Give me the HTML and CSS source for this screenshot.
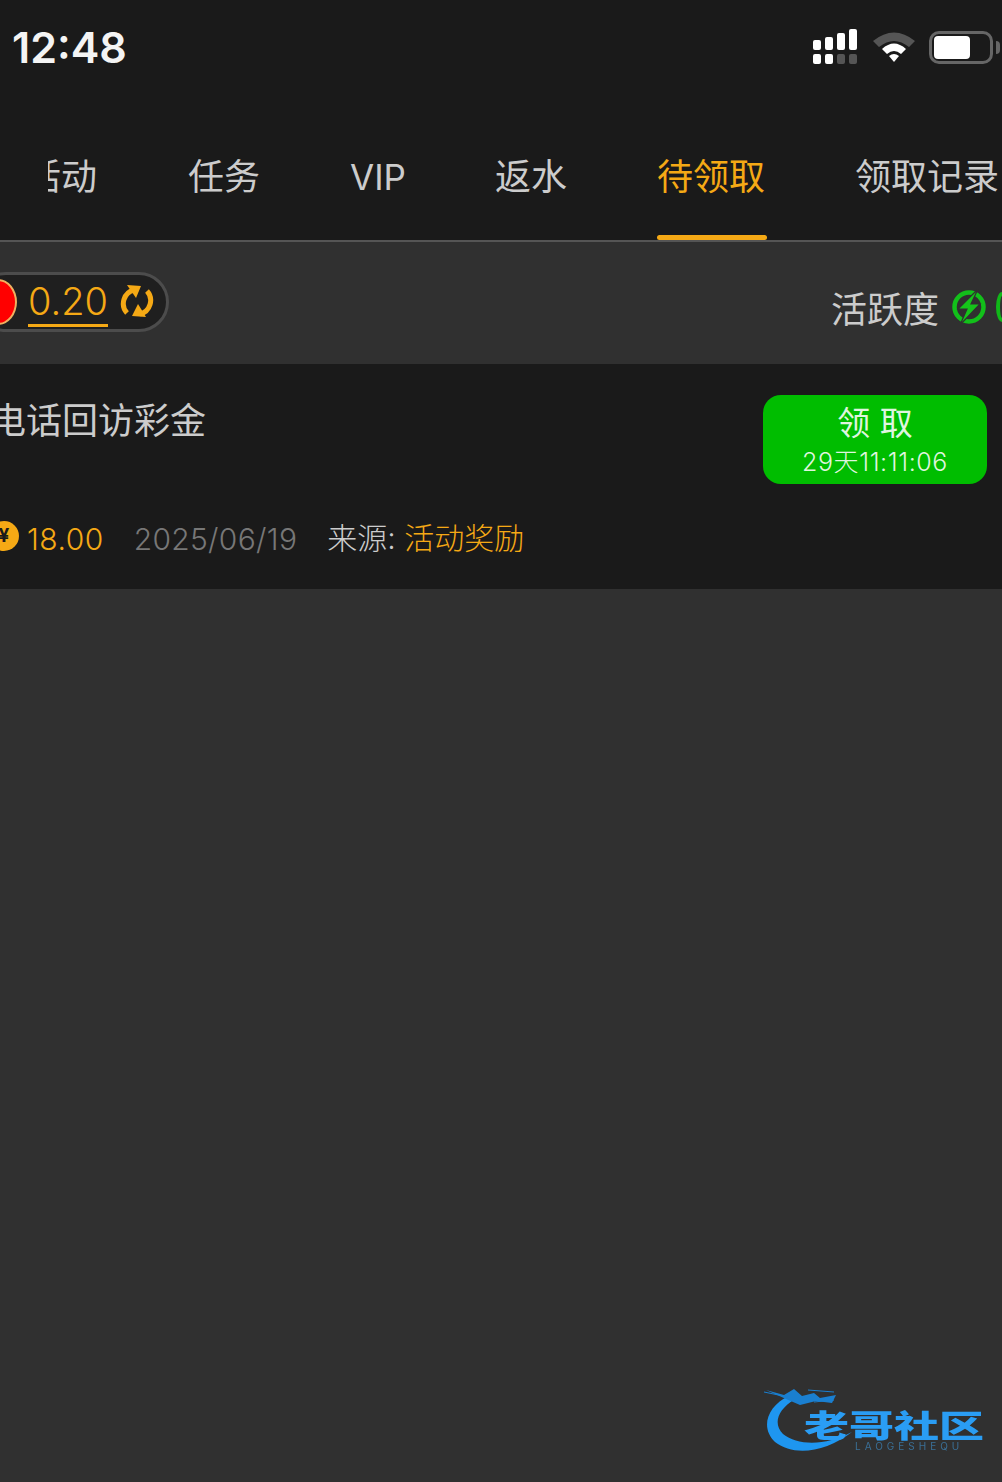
FILE: index.html
```html
<!DOCTYPE html>
<html>
<head>
    <meta charset="UTF-8">
    <title>待领取</title>
    <link rel="stylesheet" href="styles.css">
</head>
<body>
    <!-- Status bar -->
    <div class="status-bar">
        <span class="clock">12:48</span>
        <div class="status-icons">
            <svg class="signal" width="46" height="36" viewBox="0 0 46 36">
                <rect x="1" y="11" width="8" height="10" rx="2" fill="#fff"/>
                <rect x="13" y="8" width="8" height="13" rx="2" fill="#fff"/>
                <rect x="25" y="4" width="8" height="17" rx="2" fill="#fff"/>
                <rect x="37" y="0" width="8" height="21" rx="2" fill="#fff"/>
                <rect x="1" y="25" width="8" height="10" rx="2" fill="#fff"/>
                <rect x="13" y="25" width="8" height="10" rx="2" fill="#fff"/>
                <rect x="25" y="25" width="8" height="10" rx="2" fill="#555"/>
                <rect x="37" y="25" width="8" height="10" rx="2" fill="#555"/>
            </svg>
            <svg width="44" height="34" viewBox="0 0 44 34">
                <path d="M1 11 Q22 -6 43 11 L37 17 Q22 5 7 17 Z" fill="#555"/>
                <path d="M10 19 Q22 8 34 19 L29 24 Q22 18 15 24 Z" fill="#fff"/>
                <path d="M17 26 Q22 22 27 26 L22 32 Z" fill="#fff"/>
            </svg>
            <div class="battery"><div class="battery-level"></div></div>
        </div>
    </div>

    <!-- Tabs -->
    <div class="tabs">
        <div class="tab tab-cut"><span>活动</span></div>
        <div class="tab">任务</div>
        <div class="tab tab-vip">VIP</div>
        <div class="tab tab-back">返水</div>
        <div class="tab tab-active">待领取</div>
        <div class="tab tab-last">领取记录</div>
    </div>

    <!-- Balance row -->
    <div class="balance-row">
        <div class="balance-pill">
            <div class="red-dot"></div>
            <span class="balance">0.20</span>
            <svg class="refresh" width="34" height="34" viewBox="0 0 34 34" fill="none">
                <path d="M7 28 A14 14 0 0 1 14 5" stroke="#f5a915" stroke-width="5"/>
                <path d="M27 6 A14 14 0 0 1 20 29" stroke="#f5a915" stroke-width="5"/>
                <path d="M7 0 L21 1 L16 13 Z" fill="#f5a915"/>
                <path d="M26 32 L12 31 L18 19 Z" fill="#f5a915"/>
            </svg>
        </div>
        <div class="activity">
            <span>活跃度</span>
            <svg width="34" height="36" viewBox="0 0 34 36" fill="none">
                <circle cx="17" cy="18" r="14.5" stroke="#12c01a" stroke-width="4.5"/>
                <path d="M26 0 L6 20 L15 20 L8 36 L28 15 L19 15 Z" fill="#15c41a" stroke="#303030" stroke-width="1.2"/>
            </svg>
            <div class="activity-next"></div>
        </div>
    </div>

    <!-- Reward card -->
    <div class="card">
        <div class="card-top">
            <div class="card-title">电话回访彩金</div>
            <button class="claim">
                <span class="claim-label">领 取</span>
                <span class="claim-time">29天11:11:06</span>
            </button>
        </div>
        <div class="card-meta">
            <span class="coin">¥</span>
            <span class="amount">18.00</span>
            <span class="date">2025/06/19</span>
            <span class="source">来源: <em>活动奖励</em></span>
        </div>
    </div>

    <!-- Watermark -->
    <div class="watermark">
        <svg class="dragon" width="110" height="70" viewBox="0 0 110 70" fill="none">
            <path d="M25 10 C3 20 -4 42 11 56 C30 71 62 66 88 46 C62 60 34 60 19 48 C9 38 13 24 31 13 Z" fill="#1e96f0"/>
            <path d="M2 4 L20 9 L30 3 L38 10 L50 7 L56 12 L72 9 L68 17 L52 15 L36 19 L22 13 Z" fill="#1a7fd0"/>
            <path d="M0 6 L24 11 M44 4 L70 6 M50 16 L70 14" stroke="#1a7fd0" stroke-width="1"/>
        </svg>
        <div class="wm-name">老哥社区</div>
        <div class="wm-sub">LAOGESHEQU</div>
    </div>
</body>
</html>
```

FILE: styles.css
```css
body {
    margin: 0;
    width: 1002px;
    height: 1482px;
    overflow: hidden;
    position: relative;
    background: #303030;
    color: #ccc;
    font-family: Inter, "Noto Sans CJK SC", sans-serif;
}

.status-bar {
    height: 104px;
    padding: 0 9px 10px 12px;
    box-sizing: border-box;
    background: #1a1a1a;
    display: flex;
    align-items: center;
    justify-content: space-between;
}

.clock {
    font-size: 43px;
    font-weight: 600;
    color: #f4f4f4;
}

.status-icons {
    display: flex;
    align-items: center;
    gap: 13px;
}

.signal {
    margin-right: 1px;
}

.battery {
    width: 64px;
    height: 33px;
    padding: 2px;
    box-sizing: border-box;
    border: 3px solid #666;
    border-radius: 10px;
    position: relative;
}

.battery:after {
    content: "";
    position: absolute;
    right: -10px;
    top: 7px;
    width: 4px;
    height: 13px;
    background: #666;
    border-radius: 0 4px 4px 0;
}

.battery-level {
    width: 36px;
    height: 100%;
    background: #fff;
    border-radius: 4px;
}

.tabs {
    height: 136px;
    background: #1a1a1a;
    border-bottom: 2px solid #555;
    display: flex;
    padding-left: 48px;
    overflow: hidden;
}

.tab {
    flex: none;
    height: 100%;
    line-height: 146px;
    font-size: 36px;
    color: #ccc;
    white-space: nowrap;
    margin-left: 91px;
    position: relative;
}

.tab-cut {
    width: 49px;
    margin-left: 0;
    overflow: hidden;
}

.tab-cut span {
    display: block;
    margin-left: -23px;
}

.tab-vip {
    margin-left: 90px;
    font-size: 35px;
}

.tab-back {
    margin-left: 89px;
}

.tab-active {
    margin-left: 90px;
    color: #f5a915;
}

.tab-active:after {
    content: "";
    position: absolute;
    left: 0;
    right: -2px;
    bottom: 0;
    height: 5px;
    border-radius: 3px;
    background: #f5a915;
}

.tab-last {
    margin-left: 90px;
}

.balance-row {
    height: 122px;
    display: flex;
    justify-content: space-between;
    overflow: hidden;
}

.balance-pill {
    margin: 30px 0 0 -24px;
    width: 193px;
    height: 60px;
    box-sizing: border-box;
    border: 3px solid #4c4c4c;
    border-radius: 30px;
    background: #1f1f1f;
    display: flex;
    align-items: center;
}

.red-dot {
    flex: none;
    width: 38px;
    height: 46px;
    box-sizing: border-box;
    background: #f00;
    border: 2px solid #f0b060;
    border-radius: 50%;
}

.balance {
    margin-left: 11px;
    font-size: 38px;
    font-weight: 300;
    line-height: 46px;
    color: #f5a915;
    border-bottom: 3px solid #f5a915;
}

.refresh {
    margin-left: 12px;
    flex: none;
}

.activity {
    display: flex;
    align-items: center;
    height: 36px;
    margin-top: 47px;
    font-size: 36px;
    color: #ccc;
}

.activity svg {
    margin-left: 13px;
    flex: none;
}

.activity-next {
    width: 12px;
    height: 30px;
    margin: 0 -6px 0 10px;
    box-sizing: border-box;
    border: 4px solid #10b818;
    border-radius: 50%;
}

.card {
    height: 225px;
    background: #1a1a1a;
    overflow: hidden;
}

.card-top {
    display: flex;
    justify-content: space-between;
    padding: 31px 15px 0 0;
}

.card-title {
    margin: 1px 0 0 -10px;
    font-size: 36px;
    line-height: 50px;
    color: #ccc;
}

.claim {
    width: 224px;
    height: 89px;
    padding: 0;
    border: none;
    border-radius: 18px;
    background: #00bd00;
    color: #dff5df;
    font-family: inherit;
    display: flex;
    flex-direction: column;
    align-items: center;
}

.claim-label {
    margin-top: 8px;
    font-size: 33px;
    line-height: 40px;
}

.claim-time {
    margin-top: 3px;
    font-size: 25px;
    line-height: 32px;
    font-weight: 300;
    letter-spacing: 0.6px;
}

.card-meta {
    display: flex;
    align-items: center;
    height: 44px;
    margin-top: 31px;
    font-size: 30px;
    font-weight: 300;
}

.coin {
    flex: none;
    width: 30px;
    height: 30px;
    margin: -2px 0 0 -11px;
    border-radius: 50%;
    background: #f5a915;
    color: #1a1a1a;
    font-size: 19px;
    font-weight: 700;
    line-height: 29px;
    text-align: center;
}

.amount {
    margin: 4px 0 0 8px;
    color: #f5a915;
    letter-spacing: 0.5px;
}

.date {
    margin: 4px 0 0 30px;
    color: #777;
    letter-spacing: 0.3px;
}

.source {
    margin: -2px 0 0 30px;
    color: #ccc;
}

.source em {
    font-style: normal;
    color: #f5a915;
}

.watermark {
    position: absolute;
    left: 764px;
    top: 1386px;
    width: 230px;
    height: 70px;
    filter: blur(0.7px);
}

.dragon {
    position: absolute;
    left: 0;
    top: 0;
}

.wm-name {
    position: absolute;
    left: 40px;
    top: 23px;
    font-size: 45px;
    line-height: 29px;
    font-weight: 900;
    font-family: "Noto Sans CJK SC", sans-serif;
    color: #2a9df4;
    white-space: nowrap;
    transform: scaleY(0.68);
}

.wm-sub {
    position: absolute;
    left: 91px;
    top: 54px;
    font-size: 10px;
    line-height: 12px;
    letter-spacing: 4px;
    color: #3a6f96;
    white-space: nowrap;
}
```
